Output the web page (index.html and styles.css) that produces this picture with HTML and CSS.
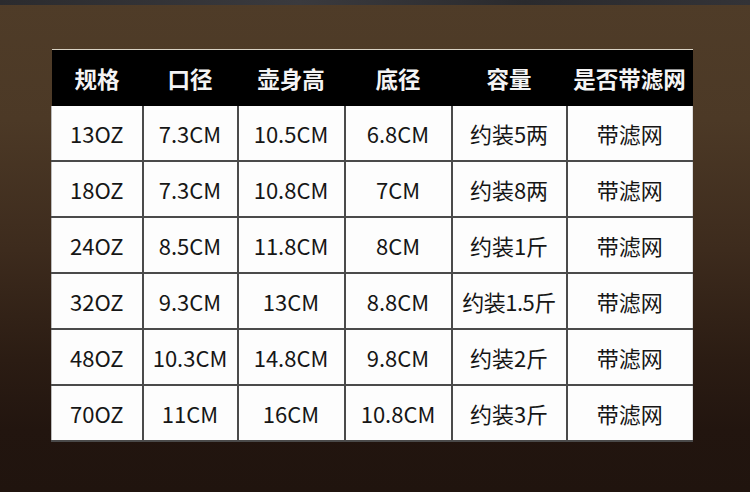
FILE: index.html
```html
<!DOCTYPE html>
<html lang="zh">
<head>
<meta charset="utf-8">
<link rel="stylesheet" href="styles.css">
</head>
<body>
<div class="topbar"></div>
<main class="stage">
  <table class="spec">
    <colgroup>
      <col class="c1"><col class="c2"><col class="c3"><col class="c4"><col class="c5"><col class="c6">
    </colgroup>
    <thead>
      <tr><th>规格</th><th>口径</th><th>壶身高</th><th>底径</th><th>容量</th><th>是否带滤网</th></tr>
    </thead>
    <tbody>
      <tr><td>13OZ</td><td>7.3CM</td><td>10.5CM</td><td>6.8CM</td><td>约装5两</td><td>带滤网</td></tr>
      <tr><td>18OZ</td><td>7.3CM</td><td>10.8CM</td><td>7CM</td><td>约装8两</td><td>带滤网</td></tr>
      <tr><td>24OZ</td><td>8.5CM</td><td>11.8CM</td><td>8CM</td><td>约装1斤</td><td>带滤网</td></tr>
      <tr><td>32OZ</td><td>9.3CM</td><td>13CM</td><td>8.8CM</td><td class="tight">约装1.5斤</td><td>带滤网</td></tr>
      <tr><td>48OZ</td><td>10.3CM</td><td>14.8CM</td><td>9.8CM</td><td>约装2斤</td><td>带滤网</td></tr>
      <tr><td>70OZ</td><td>11CM</td><td>16CM</td><td>10.8CM</td><td>约装3斤</td><td>带滤网</td></tr>
    </tbody>
  </table>
</main>
</body>
</html>
```

FILE: styles.css
```css
html, body {
  margin: 0;
  padding: 0;
}
body {
  width: 750px;
  height: 492px;
  overflow: hidden;
  background: linear-gradient(to bottom, #4f3c28 0px, #4c3926 120px, #3d2b1d 250px, #2b1c13 360px, #22150f 430px, #20140e 492px);
  font-family: "Noto Sans CJK SC", "Noto Sans", sans-serif;
}
.topbar {
  height: 5px;
  background: linear-gradient(to right, #2b2b2e, #3a3a3e 40%, #2a2a2d 70%, #333337);
}
.stage {
  padding: 44px 0 0 51px;
}
.spec {
  width: 641px;
  table-layout: fixed;
  border-collapse: collapse;
  border-top: 1px solid #d9d2c4;
}
.c1 { width: 91px; }
.c2 { width: 95px; }
.c3 { width: 107px; }
.c4 { width: 107px; }
.c5 { width: 115px; }
.c6 { width: 126px; }
.spec th {
  background: #000;
  color: #f4f4f4;
  font-weight: 700;
  font-size: 22.5px;
  height: 56px;
  padding: 0;
  text-align: center;
  white-space: nowrap;
}
.spec td {
  background: #fdfdfd;
  color: #161616;
  font-size: 22px;
  height: 54px;
  padding: 0;
  text-align: center;
  white-space: nowrap;
  border: 2px solid #4a4a4a;
}
.spec tbody tr td:first-child { border-left: 1px solid #bbb; }
.spec tbody tr td:last-child { border-right: 1px solid #ddd; }
.spec tbody tr:first-child td { border-top: none; }
.spec .tight { letter-spacing: -0.5px; }
```
